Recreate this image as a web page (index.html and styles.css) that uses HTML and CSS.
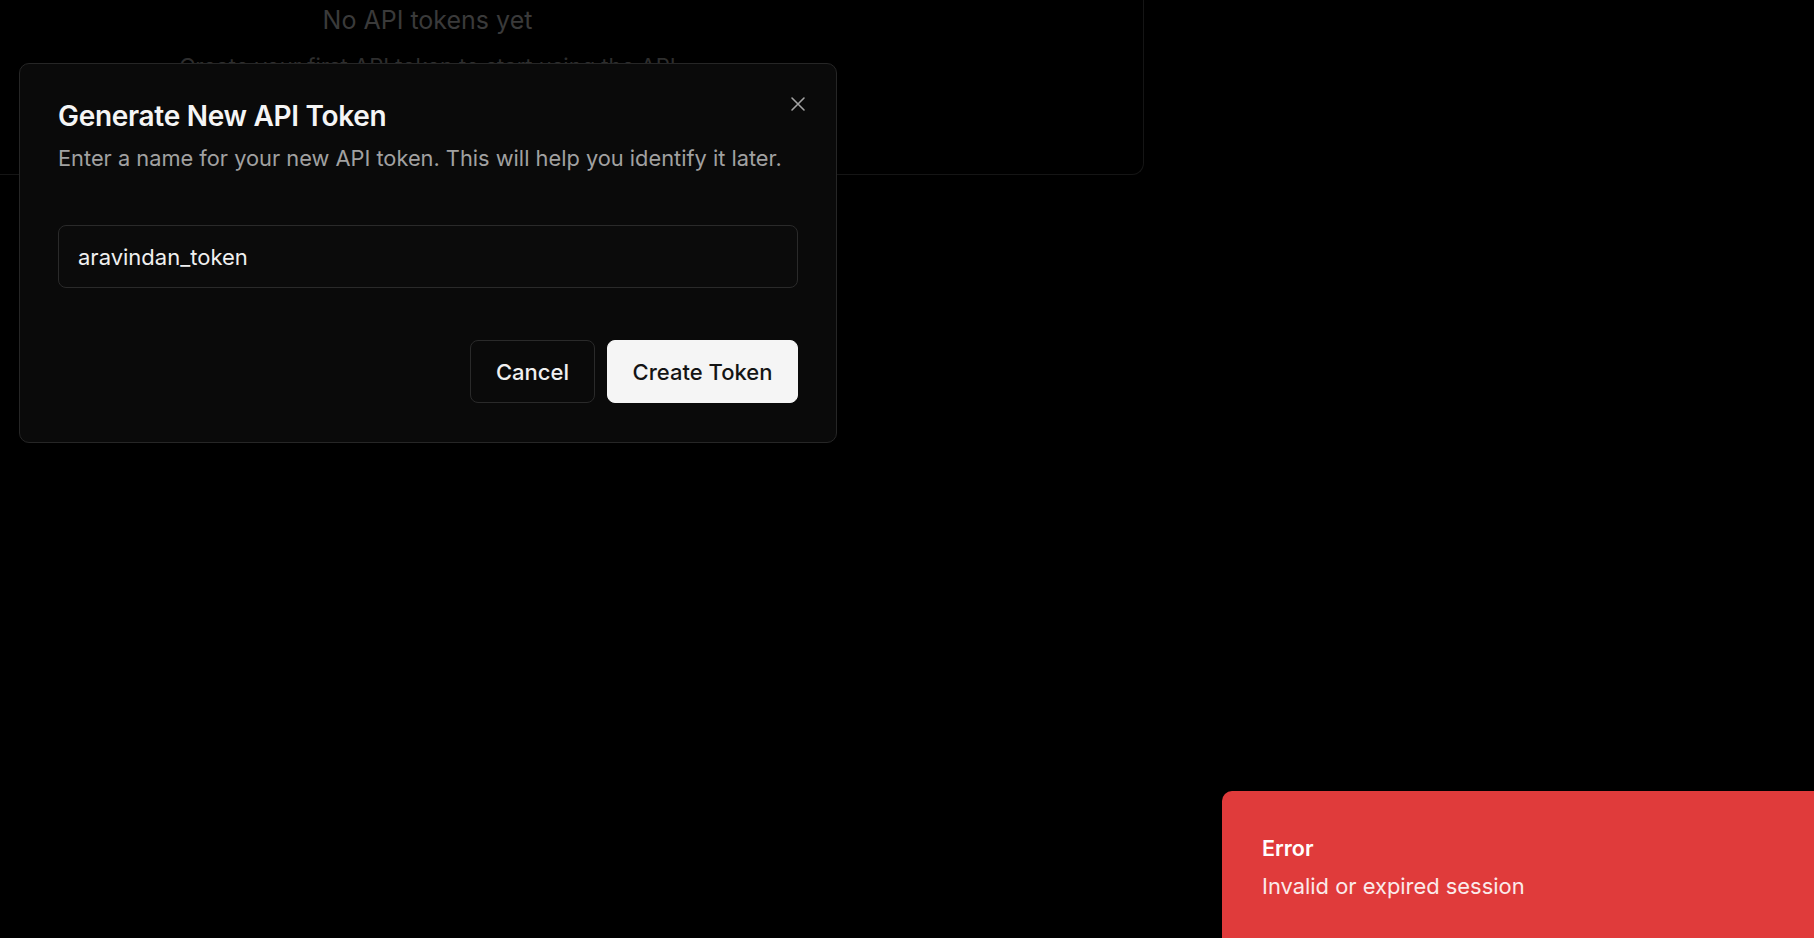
FILE: index.html
```html
<!DOCTYPE html>
<html lang="en">
<head>
<meta charset="utf-8">
<title>API Tokens</title>
<link rel="stylesheet" href="styles.css">
</head>
<body>
<main class="page">
  <section class="empty-card">
    <h3 class="empty-title">No API tokens yet</h3>
    <p class="empty-text">Create your first API token to start using the API</p>
  </section>
</main>

<div class="dialog" role="dialog" aria-labelledby="dlg-title">
  <button class="dialog-close" aria-label="Close">
    <svg width="16" height="16" viewBox="0 0 16 16" fill="none" stroke="currentColor" stroke-width="1.6" stroke-linecap="round"><path d="M2 2 L14 14 M14 2 L2 14"/></svg>
  </button>
  <h2 class="dialog-title" id="dlg-title">Generate New API Token</h2>
  <p class="dialog-desc">Enter a name for your new API token. This will help you identify it later.</p>
  <div class="field">aravindan_token</div>
  <div class="dialog-actions">
    <button class="btn btn-outline">Cancel</button>
    <button class="btn btn-primary">Create Token</button>
  </div>
</div>

<div class="toast" role="alert">
  <div class="toast-title">Error</div>
  <div class="toast-desc">Invalid or expired session</div>
</div>
</body>
</html>
```

FILE: styles.css
```css
* { box-sizing: border-box; }
html, body {
  margin: 0;
  padding: 0;
  background: #000;
  height: 100%;
  overflow: hidden;
}
body {
  font-family: Inter, "Noto Sans", sans-serif;
  color: #fafafa;
}
.page {
  display: flex;
  flex-direction: column;
}
.empty-card {
  width: 1144px;
  height: 215px;
  margin-top: -40px;
  padding: 45px 288px 0 0;
  border: 1px solid #151515;
  border-top: none;
  border-left: none;
  border-radius: 0 0 12px 0;
  display: flex;
  flex-direction: column;
  align-items: center;
}
.empty-title {
  margin: 0;
  font-size: 25px;
  font-weight: 400;
  line-height: 30px;
  color: #3a3a3a;
}
.empty-text {
  margin: 16px 0 0;
  font-size: 22px;
  line-height: 30px;
  color: #2e2e2e;
}

.dialog {
  position: fixed;
  left: 19px;
  top: 63px;
  width: 818px;
  background: #0a0a0a;
  border: 1px solid #262626;
  border-radius: 10px;
  padding: 37px 38px 39px;
  display: flex;
  flex-direction: column;
}
.dialog-close {
  position: absolute;
  right: 29px;
  top: 31px;
  width: 18px;
  height: 18px;
  padding: 1px;
  background: none;
  border: none;
  color: #a3a3a3;
  display: flex;
}
.dialog-title {
  margin: 0;
  font-size: 28px;
  font-weight: 600;
  line-height: 30px;
  letter-spacing: -0.3px;
  color: #f5f5f5;
}
.dialog-desc {
  margin: 12px 0 0;
  font-size: 21.8px;
  line-height: 30px;
  color: #a1a1a1;
}
.field {
  margin-top: 52px;
  height: 63px;
  border: 1px solid #2a2a2a;
  border-radius: 8px;
  background: #0b0b0b;
  padding: 0 19px;
  display: flex;
  align-items: center;
  font-size: 22px;
  color: #f0f0f0;
}
.dialog-actions {
  margin-top: 52px;
  display: flex;
  justify-content: flex-end;
  gap: 12px;
}
.btn {
  height: 63px;
  border-radius: 8px;
  font-family: inherit;
  font-size: 22px;
  font-weight: 500;
  padding: 0;
  cursor: pointer;
}
.btn-outline {
  width: 125px;
  background: #0a0a0a;
  border: 1px solid #2a2a2a;
  color: #f0f0f0;
}
.btn-primary {
  width: 191px;
  background: #f5f5f5;
  border: 1px solid #f5f5f5;
  color: #141414;
}

.toast {
  position: fixed;
  left: 1222px;
  top: 791px;
  width: 640px;
  height: 200px;
  background: #e03b3b;
  border-radius: 10px;
  padding: 42px 40px;
}
.toast-title {
  font-size: 21.5px;
  font-weight: 600;
  line-height: 30px;
  color: #fff;
}
.toast-desc {
  margin-top: 8px;
  font-size: 21.9px;
  line-height: 30px;
  color: #fbeaea;
}
```
